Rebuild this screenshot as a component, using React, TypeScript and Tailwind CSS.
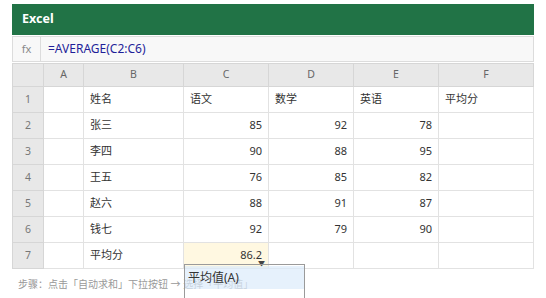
import React from "react";

const cols = ["A", "B", "C", "D", "E", "F"];

const rows: (string | number)[][] = [
  ["", "姓名", "语文", "数学", "英语", "平均分"],
  ["", "张三", 85, 92, 78, ""],
  ["", "李四", 90, 88, 95, ""],
  ["", "王五", 76, 85, 82, ""],
  ["", "赵六", 88, 91, 87, ""],
  ["", "钱七", 92, 79, 90, ""],
];

const App = () => {
  return (
    <div className="h-[298px] w-[546px] overflow-hidden bg-white font-['Noto_Sans','Noto_Sans_CJK_SC',sans-serif] text-[11px] text-[#333]">
      <div className="relative ml-3 pt-1 w-[522px]">
        {/* title bar */}
        <div className="flex h-[31px] items-center bg-[#217346] px-[10px] text-[12.5px] font-bold text-white">Excel</div>

        {/* formula bar */}
        <div className="mt-px flex h-[26px] items-center border border-[#dcdcdc] bg-[#f8f8f8]">
          <div className="flex h-full w-[28px] items-center justify-center border-r border-[#dcdcdc] text-[11px] text-[#888]">fx</div>
          <div className="pl-[7px] text-[12px] text-[#1f1f99]">=AVERAGE(C2:C6)</div>
        </div>

        {/* sheet */}
        <div className="mt-px grid grid-cols-[31px_40px_100px_85px_85px_85px_95px] border-l border-t border-[#d6d6d6]">
          <div className="h-[23px] border-b border-r border-[#d6d6d6] bg-[#e8e8e8]" />
          {cols.map(c => (
            <div
              key={c}
              className="flex h-[23px] items-center justify-center border-b border-r border-[#d6d6d6] bg-[#e8e8e8] text-[10.5px] text-[#666]"
            >
              {c}
            </div>
          ))}

          {rows.map((row, i) => (
            <React.Fragment key={i}>
              <div className="flex h-[26px] items-center justify-center border-b border-r border-[#d6d6d6] bg-[#e8e8e8] text-[10.5px] text-[#777]">
                {i + 1}
              </div>
              {row.map((cell, j) => (
                <div
                  key={j}
                  className={`flex h-[26px] items-center border-b border-r border-[#e2e2e2] px-[6px] ${
                    typeof cell === "number" ? "justify-end" : "justify-start"
                  }`}
                >
                  {cell}
                </div>
              ))}
            </React.Fragment>
          ))}

          {/* row 7 */}
          <div className="flex h-[26px] items-center justify-center border-b border-r border-[#d6d6d6] bg-[#e8e8e8] text-[10.5px] text-[#777]">
            7
          </div>
          <div className="h-[26px] border-b border-r border-[#e2e2e2]" />
          <div className="flex h-[26px] items-center border-b border-r border-[#e2e2e2] px-[6px]">平均分</div>
          <div className="relative flex h-[26px] items-center justify-end border-b border-r border-[#e2e2e2] bg-[#fff8e1] px-[6px]">
            86.2
            <span className="absolute bottom-[1px] right-[3px] text-[7px] leading-none text-[#444]">▼</span>
          </div>
          <div className="h-[26px] border-b border-r border-[#e2e2e2]" />
          <div className="h-[26px] border-b border-r border-[#e2e2e2]" />
          <div className="h-[26px] border-b border-r border-[#e2e2e2]" />
        </div>

        {/* hint */}
        <div className="mt-[8px] pl-[6px] text-[10px] leading-[14px] text-[#999]">
          步骤：点击「自动求和」下拉按钮 → 选择「平均值」
        </div>

        {/* dropdown */}
        <div className="absolute left-[172px] top-[264px] h-[60px] w-[121px] border border-[#9a9a9a] pt-px">
          <div className="flex h-[23px] items-center bg-[#dcebfb]/70 px-[3px] text-[12px] text-[#333]">平均值(A)</div>
        </div>
      </div>
    </div>
  );
};

export default App;
